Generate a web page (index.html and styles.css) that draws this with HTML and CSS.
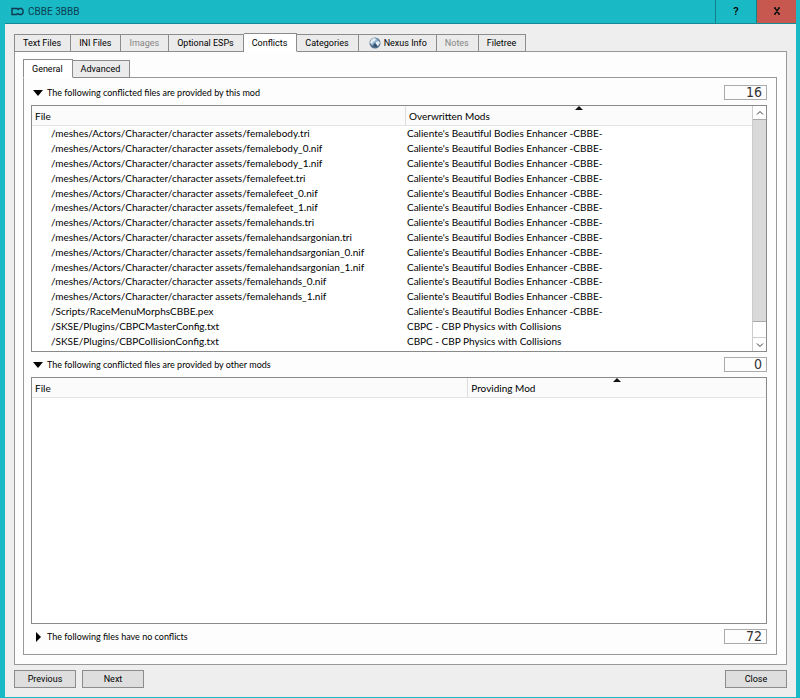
FILE: index.html
```html
<!DOCTYPE html>
<html lang="en">
<head>
<meta charset="utf-8">
<title>CBBE 3BBB</title>
<link rel="stylesheet" href="styles.css">
</head>
<body>
<header class="titlebar">
  <svg class="app-icon" viewBox="0 0 13 9" aria-hidden="true"><path d="M1 1.500h5l1 1 1-1h2.500l1.500 1.500v3L10.500 7.500H8.500l-2-1-1 1H1z"/></svg>
  <h1>CBBE 3BBB</h1>
  <button class="help" type="button" aria-label="Help">?</button>
  <button class="exit" type="button" aria-label="Close window"><svg viewBox="0 0 8 8" aria-hidden="true"><path d="M1 1h2M5 1h2M1 7h2M5 7h2M2 1l4 6M6 1L2 7"/></svg></button>
</header>
<main class="window">
  <nav class="tabs" role="tablist">
    <button type="button" role="tab">Text Files</button>
    <button type="button" role="tab">INI Files</button>
    <button type="button" role="tab" disabled>Images</button>
    <button type="button" role="tab">Optional ESPs</button>
    <button type="button" role="tab" class="active" aria-selected="true">Conflicts</button>
    <button type="button" role="tab">Categories</button>
    <button type="button" role="tab"><svg class="globe" viewBox="0 0 12 12" aria-hidden="true"><circle cx="6" cy="6" r="5.500" fill="#50718f"/><circle cx="5.500" cy="5" r="4" fill="#8fb0cc"/><path d="M2 3l3-2 2 1-1 2-2 1-1 2-2-1zM7 5l3-1 1 2-2 3-2-1z" fill="#e4edf3"/><path d="M4 8l2-2 2 2v2H5z" fill="#36536e"/></svg>Nexus Info</button>
    <button type="button" role="tab" disabled>Notes</button>
    <button type="button" role="tab">Filetree</button>
  </nav>
  <section class="page">
    <nav class="tabs" role="tablist">
      <button type="button" role="tab" class="active" aria-selected="true">General</button>
      <button type="button" role="tab">Advanced</button>
    </nav>
    <div class="general">
      <div class="section-head">
        <button type="button" aria-expanded="true"><svg viewBox="0 0 10 10" aria-hidden="true"><path d="M0 2h10L5 8z"/></svg>The following conflicted files are provided by this mod</button>
        <output>16</output>
      </div>
      <div class="list">
        <table class="overwrites">
          <thead><tr><th>File</th><th class="sorted">Overwritten Mods</th></tr></thead>
          <tbody>
            <tr><td>/meshes/Actors/Character/character assets/femalebody.tri</td><td>Caliente's Beautiful Bodies Enhancer -CBBE-</td></tr>
            <tr><td>/meshes/Actors/Character/character assets/femalebody_0.nif</td><td>Caliente's Beautiful Bodies Enhancer -CBBE-</td></tr>
            <tr><td>/meshes/Actors/Character/character assets/femalebody_1.nif</td><td>Caliente's Beautiful Bodies Enhancer -CBBE-</td></tr>
            <tr><td>/meshes/Actors/Character/character assets/femalefeet.tri</td><td>Caliente's Beautiful Bodies Enhancer -CBBE-</td></tr>
            <tr><td>/meshes/Actors/Character/character assets/femalefeet_0.nif</td><td>Caliente's Beautiful Bodies Enhancer -CBBE-</td></tr>
            <tr><td>/meshes/Actors/Character/character assets/femalefeet_1.nif</td><td>Caliente's Beautiful Bodies Enhancer -CBBE-</td></tr>
            <tr><td>/meshes/Actors/Character/character assets/femalehands.tri</td><td>Caliente's Beautiful Bodies Enhancer -CBBE-</td></tr>
            <tr><td>/meshes/Actors/Character/character assets/femalehandsargonian.tri</td><td>Caliente's Beautiful Bodies Enhancer -CBBE-</td></tr>
            <tr><td>/meshes/Actors/Character/character assets/femalehandsargonian_0.nif</td><td>Caliente's Beautiful Bodies Enhancer -CBBE-</td></tr>
            <tr><td>/meshes/Actors/Character/character assets/femalehandsargonian_1.nif</td><td>Caliente's Beautiful Bodies Enhancer -CBBE-</td></tr>
            <tr><td>/meshes/Actors/Character/character assets/femalehands_0.nif</td><td>Caliente's Beautiful Bodies Enhancer -CBBE-</td></tr>
            <tr><td>/meshes/Actors/Character/character assets/femalehands_1.nif</td><td>Caliente's Beautiful Bodies Enhancer -CBBE-</td></tr>
            <tr><td>/Scripts/RaceMenuMorphsCBBE.pex</td><td>Caliente's Beautiful Bodies Enhancer -CBBE-</td></tr>
            <tr><td>/SKSE/Plugins/CBPCMasterConfig.txt</td><td>CBPC - CBP Physics with Collisions</td></tr>
            <tr><td>/SKSE/Plugins/CBPCollisionConfig.txt</td><td>CBPC - CBP Physics with Collisions</td></tr>
          </tbody>
        </table>
        <div class="scrollbar">
          <button type="button" aria-label="Scroll up"><svg viewBox="0 0 8 8" aria-hidden="true"><path d="M1 5.500l3-3 3 3"/></svg></button>
          <div class="track"><div class="thumb"></div></div>
          <button type="button" aria-label="Scroll down"><svg viewBox="0 0 8 8" aria-hidden="true"><path d="M1 2.500l3 3 3-3"/></svg></button>
        </div>
      </div>
      <div class="section-head">
        <button type="button" aria-expanded="true"><svg viewBox="0 0 10 10" aria-hidden="true"><path d="M0 2h10L5 8z"/></svg>The following conflicted files are provided by other mods</button>
        <output>0</output>
      </div>
      <div class="list">
        <table class="overwritten">
          <thead><tr><th>File</th><th class="sorted">Providing Mod</th></tr></thead>
        </table>
      </div>
      <div class="section-head">
        <button type="button" aria-expanded="false"><svg viewBox="0 0 10 10" aria-hidden="true"><path d="M3 0v10l5-5z"/></svg>The following files have no conflicts</button>
        <output>72</output>
      </div>
    </div>
  </section>
  <footer class="actions">
    <button type="button">Previous</button>
    <button type="button">Next</button>
    <button type="button" class="close">Close</button>
  </footer>
</main>
</body>
</html>
```
FILE: styles.css
```css
* { box-sizing: border-box; }

body {
  margin: 0;
  height: 100vh;
  display: flex;
  flex-direction: column;
  padding: 0 4px 1px 5px;
  background: #19bac5;
  color: #000;
  font: 9px/12px Roboto, sans-serif;
}

button {
  margin: 0;
  padding: 0;
  border: 0;
  background: none;
  color: inherit;
  font: inherit;
}

.titlebar {
  flex: none;
  display: flex;
  align-items: center;
  height: 24px;
  padding-left: 6px;
  border-bottom: 1px solid #168a94;
}

.app-icon { width: 13px; height: 9px; fill: none; stroke: #12374f; stroke-width: 1.4; }

.titlebar h1 {
  flex: 1;
  margin: 0 0 0 4px;
  color: #0b4052;
  font: 400 10px/12px Roboto, sans-serif;
}

.titlebar button { align-self: stretch; width: 40px; border-left: 1px solid #12808a; }
.titlebar .help { font-size: 11px; font-weight: 500; width: 41px; }
.titlebar .exit { background: #c75850; }
.exit svg { width: 8px; height: 8px; fill: none; stroke: #111; stroke-width: 1.4; }

.window {
  flex: 1;
  min-height: 0;
  display: flex;
  flex-direction: column;
  padding: 9px;
  background: #eee;
}

.tabs {
  position: relative;
  flex: none;
  display: flex;
  align-items: flex-end;
  height: 19px;
  margin-bottom: -1px;
}

.tabs button {
  display: flex;
  align-items: center;
  height: 18px;
  padding: 0 9px 0 8px;
  border: 1px solid #8c8c8c;
  border-left-width: 0;
  background: #ebebeb;
}

.tabs button:first-child { border-left-width: 1px; }
.tabs .active { height: 19px; background: #fff; border-bottom-color: #fff; }
.tabs button:disabled { color: #858585; }
.globe { width: 12px; height: 12px; margin: 0 3px 0 2px; }

.page {
  flex: 1;
  min-height: 0;
  display: flex;
  flex-direction: column;
  padding: 7px 9px 9px 8px;
  border: 1px solid #999;
  background: #fdfdfd;
}

.general {
  flex: 1;
  min-height: 0;
  display: flex;
  flex-direction: column;
  padding: 2px 9px 5px 7px;
  border: 1px solid #999;
}

.section-head {
  flex: none;
  display: flex;
  align-items: center;
  justify-content: space-between;
  height: 25px;
  font-family: Lato, sans-serif;
}

.section-head button { display: flex; align-items: center; padding-left: 2px; }
.section-head svg { width: 10px; height: 10px; margin-right: 4px; }

output {
  width: 43px;
  height: 15px;
  padding-right: 4px;
  border: 1px solid #aaa;
  color: #333;
  font: 14px/13px "Liberation Sans Narrow", "DejaVu Sans Condensed", sans-serif;
  text-align: right;
}

.list {
  flex: 1;
  min-height: 0;
  display: flex;
  align-items: flex-start;
  border: 1px solid #8a8a8a;
  background: #fff;
  font: 10px/14px Lato, sans-serif;
}

table { flex: 1; table-layout: fixed; border-collapse: separate; border-spacing: 0; }
.overwrites { height: calc(100% - 3px); }

th {
  height: 20px;
  padding: 0 3px;
  border-bottom: 1px solid #e4e4e4;
  background: #fbfbfb;
  font-weight: 400;
  text-align: left;
}

.sorted { position: relative; border-left: 1px solid #ddd; }

.sorted::before {
  content: "";
  position: absolute;
  top: 0;
  left: 50%;
  margin-left: -4px;
  border: 4px solid transparent;
  border-top: 0;
  border-bottom-color: #111;
}

td { padding: 0 2px; white-space: nowrap; }
td:first-child { padding-left: 19px; }
.overwrites th:first-child { width: 51.8%; }
.overwritten th:first-child { width: 59.3%; }

.scrollbar { align-self: stretch; width: 14px; display: flex; flex-direction: column; border-left: 1px solid #ccc; }
.scrollbar button { flex: none; height: 13px; display: grid; place-items: center; }
.scrollbar svg { width: 8px; height: 8px; fill: none; stroke: #333; }
.track { flex: 1; border-bottom: 1px solid #ccc; }
.thumb { height: 93%; border: 1px solid #aaa; border-width: 1px 0; background: #d9d9d9; }

.actions { flex: none; display: flex; gap: 6px; margin-top: 5px; }
.actions button { width: 62px; height: 18px; border: 1px solid #8c8c8c; background: #dedede; }
.actions .close { margin-left: auto; }
```
